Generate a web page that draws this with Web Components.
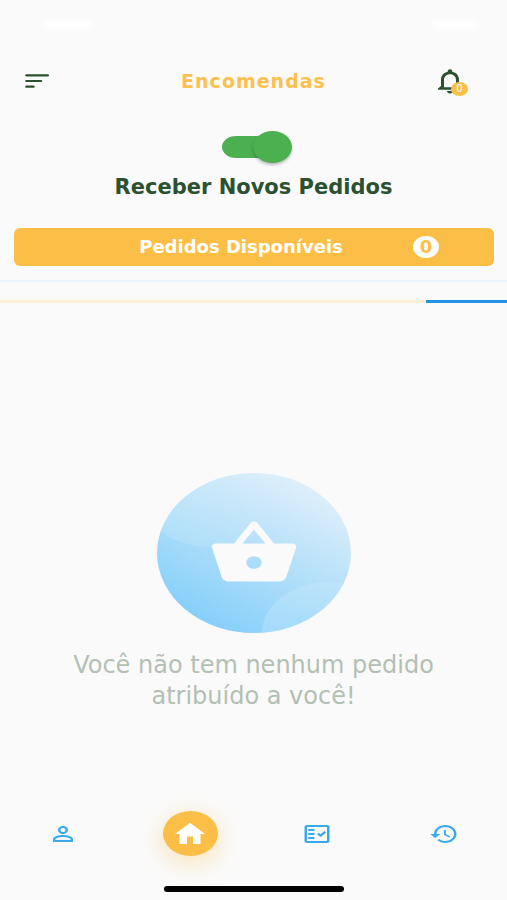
<!DOCTYPE html>
<html lang="pt">
<head>
<meta charset="utf-8">
<meta name="viewport" content="width=device-width, initial-scale=1">
<title>Encomendas</title>
<style>
body {
  margin: 0;
  background: #fafafa;
  font-family: "DejaVu Sans", Verdana, sans-serif;
}
</style>
</head>
<body>
<orders-page></orders-page>

<script>
function makeTemplate(html) {
  const template = document.createElement('template')
  template.innerHTML = html
  return template
}

class BaseElement extends HTMLElement {
  constructor () {
    super()
    this.attachShadow({ mode: 'open' })
    .appendChild(this.constructor.template.content.cloneNode(true))
  }
}

// icons

const icons = {
  menu: '<path d="M3.600 6.300h17M3.600 12h11.500M3.600 17.700h5.500" fill="none" stroke="currentColor" stroke-width="2.200" stroke-linecap="round"/>',
  bell: '<path d="M12 22c1.1 0 2-.9 2-2h-4c0 1.1.9 2 2 2zm6-6v-5c0-3.07-1.63-5.64-4.5-6.32V4c0-.83-.67-1.5-1.5-1.5s-1.5.67-1.5 1.5v.68C7.64 5.36 6 7.92 6 11v5l-2 2v1h16v-1l-2-2zm-2 1H8v-6c0-2.48 1.51-4.5 4-4.5s4 2.02 4 4.5v6z"/>',
  basket: '<path d="M17.21 9l-4.38-6.56c-.19-.28-.51-.42-.83-.42-.32 0-.64.14-.83.43L6.79 9H2c-.55 0-1 .45-1 1 0 .09.01.18.04.27l2.54 9.27c.23.84 1 1.46 1.92 1.46h13c.92 0 1.69-.62 1.93-1.46l2.54-9.27L23 10c0-.55-.45-1-1-1h-4.79zM9 9l3-4.4L15 9H9zm3 8c-1.1 0-2-.9-2-2s.9-2 2-2 2 .9 2 2-.9 2-2 2z"/>',
  person: '<path d="M12 5.9c1.16 0 2.1.94 2.1 2.1s-.94 2.1-2.1 2.1S9.9 9.16 9.9 8s.94-2.1 2.1-2.1m0 9c2.97 0 6.1 1.46 6.1 2.1v1.1H5.9V17c0-.64 3.13-2.1 6.1-2.1M12 4C9.79 4 8 5.79 8 8s1.79 4 4 4 4-1.79 4-4-1.79-4-4-4zm0 9c-2.67 0-8 1.34-8 4v3h16v-3c0-2.66-5.33-4-8-4z"/>',
  home: '<path d="M10 20v-6h4v6h5v-8h3L12 3 2 12h3v8z"/>',
  list: '<path d="M20 3H4c-1.1 0-2 .9-2 2v14c0 1.1.9 2 2 2h16c1.1 0 2-.9 2-2V5c0-1.1-.9-2-2-2zm0 16H4V5h16v14zM5 7h5v2H5zM5 11h5v2H5zM5 15h5v2H5zM19.41 10.42L17.99 9l-3.17 3.17-1.41-1.42L12 12.16 14.82 15z"/>',
  history: '<path d="M13 3c-4.97 0-9 4.03-9 9H1l3.89 3.89.07.14L9 12H6c0-3.87 3.13-7 7-7s7 3.13 7 7-3.13 7-7 7c-1.93 0-3.68-.79-4.94-2.06l-1.42 1.42C8.27 19.99 10.51 21 13 21c4.97 0 9-4.03 9-9s-4.03-9-9-9zm-1 5v5l4.28 2.54.72-1.21-3.5-2.08V8H12z"/>'
}

class AppIcon extends BaseElement {
  static template = makeTemplate(`
<style>
:host {
  display: block;
  flex: none;
  width: 30px;
  height: 24px;
}
svg {
  display: block;
  width: 100%;
  height: 100%;
  fill: currentColor;
}
</style>
<svg viewBox="0 0 24 24" preserveAspectRatio="none" aria-hidden="true"></svg>
`)

  connectedCallback() {
    this.shadowRoot.querySelector('svg').innerHTML = icons[this.getAttribute('name')]
  }
}
customElements.define('app-icon', AppIcon)

// pale system bar on top

class StatusBar extends BaseElement {
  static template = makeTemplate(`
<style>
:host {
  display: flex;
  justify-content: space-between;
  align-items: center;
  height: 50px;
  padding: 0 28px 0 44px;
}
span {
  width: 48px;
  height: 8px;
  border-radius: 4px;
  background: #fff;
  filter: blur(3px);
}
</style>
<span></span>
<span></span>
`)
}
customElements.define('status-bar', StatusBar)

class AppHeader extends BaseElement {
  static template = makeTemplate(`
<style>
:host {
  display: grid;
  grid-template-columns: 60px 1fr 60px;
  align-items: center;
  height: 62px;
  padding: 0 22px;
  color: #2b5130;
}
h1 {
  margin: 0;
  text-align: center;
  font-size: 19px;
  line-height: 24px;
  letter-spacing: 1px;
  color: #fcc050;
}
button {
  position: relative;
  display: block;
  padding: 0;
  border: 0;
  background: none;
  color: inherit;
  font: inherit;
}
.bell {
  justify-self: end;
  margin-right: 17px;
}
.bell app-icon {
  width: 36px;
  height: 30px;
}
.badge {
  position: absolute;
  right: 0;
  bottom: 0;
  width: 17px;
  height: 14px;
  border-radius: 50%;
  background: #fbbf48;
  color: #fff;
  font-size: 10px;
  line-height: 14px;
  text-align: center;
}
</style>
<button type="button" aria-label="Menu"><app-icon name="menu"></app-icon></button>
<h1><slot></slot></h1>
<button type="button" class="bell"><app-icon name="bell"></app-icon><span class="badge"></span></button>
`)

  connectedCallback() {
    this.shadowRoot.querySelector('.badge').textContent = this.getAttribute('count')
  }
}
customElements.define('app-header', AppHeader)

class ToggleSwitch extends BaseElement {
  static template = makeTemplate(`
<style>
:host {
  display: block;
}
label {
  display: flex;
  flex-direction: column;
  align-items: center;
  gap: 11px;
  padding-top: 19px;
  color: #2b5130;
  font-size: 21px;
  line-height: 26px;
  font-weight: bold;
}
input {
  appearance: none;
  display: grid;
  align-items: center;
  width: 70px;
  height: 32px;
  margin: 0 0 0 7px;
}
input::before, input::after {
  content: "";
  grid-area: 1 / 1;
}
input::before {
  width: 60px;
  height: 22px;
  border-radius: 14px / 11px;
  background: #bbb;
}
input::after {
  width: 39px;
  height: 32px;
  border-radius: 50%;
  background: #fff;
  box-shadow: 0 2px 3px rgba(0, 0, 0, .25);
}
input:checked::before {
  background: #4caf50;
}
input:checked::after {
  justify-self: end;
  background: #4caf50;
}
</style>
<label><input type="checkbox" role="switch" checked><span><slot></slot></span></label>
`)
}
customElements.define('toggle-switch', ToggleSwitch)

class CountButton extends BaseElement {
  static template = makeTemplate(`
<style>
:host {
  display: block;
  padding: 28px 13px 14px 14px;
  border-bottom: 2px solid #e8f3fb;
}
button {
  display: flex;
  align-items: center;
  width: 100%;
  height: 38px;
  padding: 0 55px;
  border: 0;
  border-radius: 6px;
  background: #fbbf48;
  color: #fff;
  font: bold 18px/24px "DejaVu Sans", Verdana, sans-serif;
}
.label {
  flex: 1;
}
.count {
  width: 26px;
  height: 22px;
  border-radius: 50%;
  background: #fff;
  color: #fbbf48;
  line-height: 22px;
}
</style>
<button type="button"><span class="label"><slot></slot></span><span class="count"></span></button>
`)

  connectedCallback() {
    this.shadowRoot.querySelector('.count').textContent = this.getAttribute('count')
  }
}
customElements.define('count-button', CountButton)

class LoadingBar extends BaseElement {
  static template = makeTemplate(`
<style>
:host {
  display: flex;
  justify-content: flex-end;
  height: 3px;
  margin-top: 18px;
  background: #fcefd8;
}
div {
  width: 16%;
  background: #2290e3;
}
</style>
<div></div>
`)
}
customElements.define('loading-bar', LoadingBar)

class EmptyState extends BaseElement {
  static template = makeTemplate(`
<style>
:host {
  display: flex;
  flex-direction: column;
  align-items: center;
  gap: 17px;
  padding: 0 64px;
}
.art {
  display: grid;
  place-items: center;
  color: #fafafa;
}
.art > * {
  grid-area: 1 / 1;
}
.art svg {
  display: block;
  width: 195px;
  height: 160px;
}
.art app-icon {
  width: 92px;
  height: 76px;
}
p {
  margin: 0;
  color: #b4bfb4;
  font-size: 24px;
  line-height: 31px;
  text-align: center;
}
</style>
<div class="art">
<svg viewBox="0 0 195 160" aria-hidden="true">
  <defs>
    <linearGradient id="sky" x1="0.2" y1="1" x2="0.8" y2="0.08">
      <stop offset="0" stop-color="#7fcdfa"/>
      <stop offset="0.5" stop-color="#aedef9"/>
      <stop offset="1" stop-color="#dfeffa"/>
    </linearGradient>
    <linearGradient id="fade" x1="0" y1="0" x2="1" y2="0">
      <stop offset="0" stop-color="#fff" stop-opacity="0.18"/>
      <stop offset="1" stop-color="#fff" stop-opacity="0"/>
    </linearGradient>
    <clipPath id="oval"><ellipse cx="98" cy="80" rx="97" ry="80"/></clipPath>
  </defs>
  <g clip-path="url(#oval)">
    <rect width="195" height="160" fill="url(#sky)"/>
    <ellipse cx="54" cy="8" rx="76" ry="66" fill="url(#fade)"/>
    <ellipse cx="173" cy="160" rx="67" ry="51" fill="url(#fade)"/>
  </g>
</svg>
<app-icon name="basket"></app-icon>
</div>
<p><slot></slot></p>
`)
}
customElements.define('empty-state', EmptyState)

class NavItem extends BaseElement {
  static template = makeTemplate(`
<style>
:host {
  display: grid;
  place-items: center;
  color: #3aa9ec;
}
a {
  display: grid;
  place-items: center;
  width: 55px;
  height: 45px;
  border-radius: 50%;
  color: inherit;
}
:host([active]) a {
  background: #fbbf48;
  color: #fff;
  box-shadow: 0 6px 24px rgba(251, 191, 72, .4);
}
:host([active]) app-icon {
  width: 36px;
  height: 30px;
}
</style>
<a href="#"></a>
`)

  connectedCallback() {
    const icon = document.createElement('app-icon')
    icon.setAttribute('name', this.getAttribute('icon'))
    const link = this.shadowRoot.querySelector('a')
    link.setAttribute('aria-label', this.getAttribute('label'))
    link.replaceChildren(icon)
  }
}
customElements.define('nav-item', NavItem)

class BottomNav extends BaseElement {
  static template = makeTemplate(`
<style>
:host {
  display: block;
}
nav {
  display: grid;
  grid-template-columns: repeat(4, 1fr);
}
.handle {
  width: 180px;
  height: 6px;
  margin: 30px auto 8px;
  border-radius: 3px;
  background: #000;
}
</style>
<nav><slot></slot></nav>
<div class="handle"></div>
`)
}
customElements.define('bottom-nav', BottomNav)

class OrdersPage extends BaseElement {
  static template = makeTemplate(`
<style>
:host {
  display: flex;
  flex-direction: column;
  min-height: 100vh;
}
main {
  flex: 1;
  display: flex;
  flex-direction: column;
}
empty-state {
  margin: auto 0;
  padding-top: 70px;
}
</style>
<status-bar></status-bar>
<app-header count="0">Encomendas</app-header>
<main>
  <toggle-switch>Receber Novos Pedidos</toggle-switch>
  <count-button count="0">Pedidos Disponíveis</count-button>
  <loading-bar></loading-bar>
  <empty-state>Você não tem nenhum pedido atribuído a você!</empty-state>
</main>
<bottom-nav>
  <nav-item icon="person" label="Perfil"></nav-item>
  <nav-item icon="home" label="Início" active></nav-item>
  <nav-item icon="list" label="Pedidos"></nav-item>
  <nav-item icon="history" label="Histórico"></nav-item>
</bottom-nav>
`)
}
customElements.define('orders-page', OrdersPage)
</script>
</body>
</html>
